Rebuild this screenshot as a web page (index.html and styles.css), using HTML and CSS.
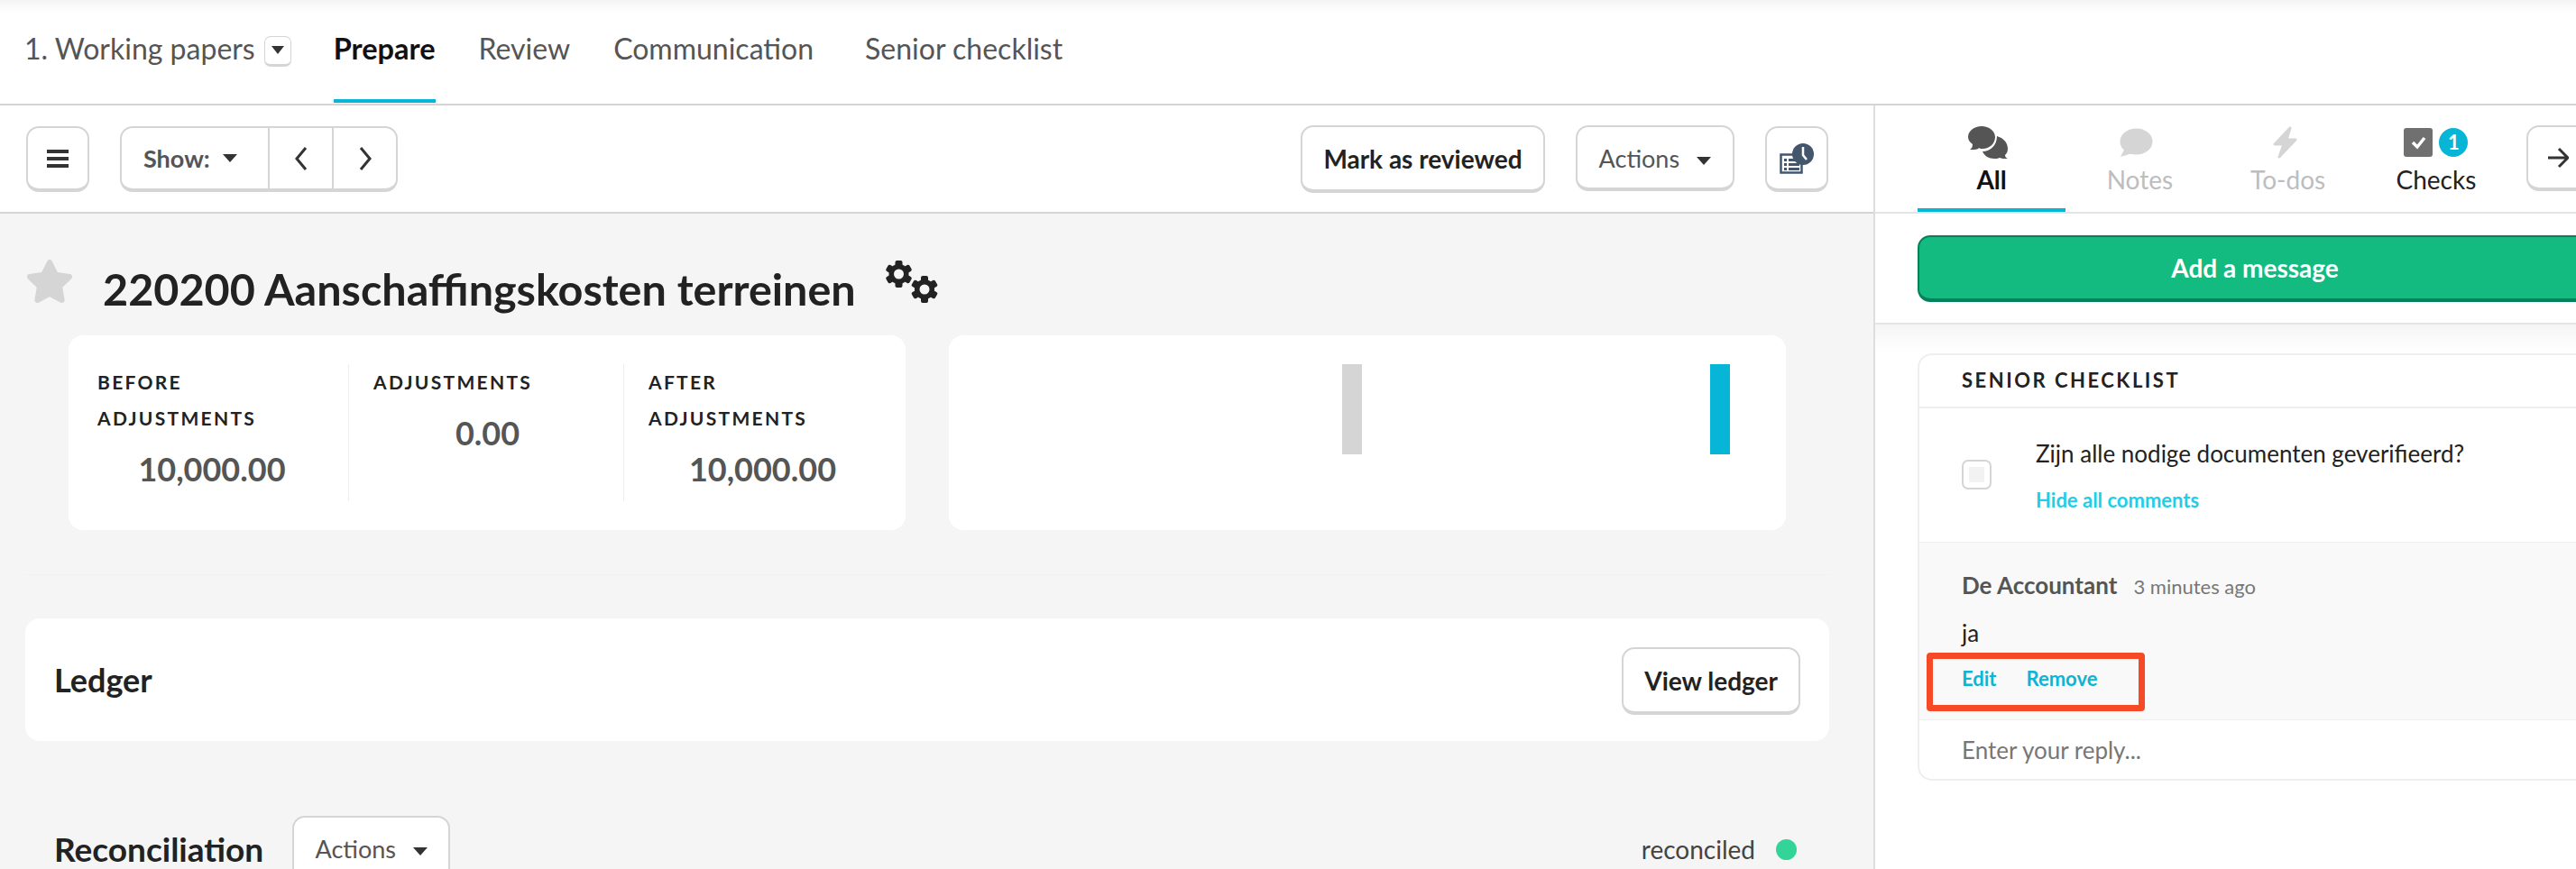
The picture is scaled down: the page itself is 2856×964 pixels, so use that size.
FILE: index.html
```html
<!DOCTYPE html>
<html lang="en">
<head>
    <meta charset="UTF-8">
    <title>Working papers</title>
    <link rel="stylesheet" href="styles.css">
</head>
<body>
    <nav class="topnav">
        <span class="crumb">1. Working papers</span>
        <button class="btn mini"><span class="caret small"></span></button>
        <a class="tab active">Prepare</a>
        <a class="tab">Review</a>
        <a class="tab">Communication</a>
        <a class="tab last">Senior checklist</a>
    </nav>

    <div class="main">
        <div class="left">
            <div class="toolbar">
                <button class="btn icon-btn">
                    <svg class="burger" viewBox="0 0 24 22"><path d="M0 1h24v4H0zM0 9h24v4H0zM0 17h24v4H0z"/></svg>
                </button>
                <div class="btn-group">
                    <div class="group-cell show">Show: <span class="caret"></span></div>
                    <div class="group-cell nav-cell">
                        <svg class="chev" viewBox="0 0 16 28"><path d="M13 2L3 14l10 12"/></svg>
                    </div>
                    <div class="group-cell nav-cell">
                        <svg class="chev" viewBox="0 0 16 28"><path d="M3 2l10 12L3 26"/></svg>
                    </div>
                </div>
                <div class="spacer"></div>
                <button class="btn strong">Mark as reviewed</button>
                <button class="btn plain">Actions <span class="caret"></span></button>
                <button class="btn icon-btn">
                    <svg class="history" viewBox="0 0 38 34">
                        <path d="M1.5 12.5h23v20h-23z" fill="#fff" stroke="#44566c" stroke-width="2.5"/>
                        <path d="M5 17h3v3H5zM10 17h12v3H10zM5 22h3v3H5zM10 22h12v3H10zM5 27h3v3H5zM10 27h12v3H10z" fill="#44566c"/>
                        <circle cx="26" cy="12" r="12" fill="#44566c"/>
                        <path d="M26 4v9l4 5" fill="none" stroke="#fff" stroke-width="2.5"/>
                    </svg>
                </button>
            </div>

            <div class="content">
                <div class="title-row">
                    <svg class="star" viewBox="0 0 576 512"><path d="M259.3 17.8L194 150.2 47.9 171.5c-26.2 3.8-36.7 36.1-17.7 54.6l105.7 103-25 145.5c-4.5 26.3 23.2 46 46.4 33.7L288 439.6l130.7 68.7c23.2 12.2 50.9-7.4 46.4-33.7l-25-145.5 105.7-103c19-18.5 8.5-50.8-17.7-54.6L382 150.2 316.7 17.8c-11.7-23.6-45.6-23.9-57.4 0z"/></svg>
                    <h1>220200 Aanschaffingskosten terreinen</h1>
                    <svg class="gears" viewBox="0 0 60 48">
                        <g transform="translate(15.5 16)">
                            <rect x="-4" y="-15" width="8" height="30" rx="2"/>
                            <rect x="-4" y="-15" width="8" height="30" rx="2" transform="rotate(60)"/>
                            <rect x="-4" y="-15" width="8" height="30" rx="2" transform="rotate(120)"/>
                            <circle r="11"/>
                            <circle r="5.5" fill="#f5f5f5"/>
                        </g>
                        <g transform="translate(44 33)">
                            <rect x="-4" y="-15" width="8" height="30" rx="2"/>
                            <rect x="-4" y="-15" width="8" height="30" rx="2" transform="rotate(60)"/>
                            <rect x="-4" y="-15" width="8" height="30" rx="2" transform="rotate(120)"/>
                            <circle r="11"/>
                            <circle r="5.5" fill="#f5f5f5"/>
                        </g>
                    </svg>
                </div>

                <div class="cards">
                    <div class="card stats">
                        <div class="stat">
                            <div class="stat-label">BEFORE<br>ADJUSTMENTS</div>
                            <div class="stat-value">10,000.00</div>
                        </div>
                        <div class="stat">
                            <div class="stat-label">ADJUSTMENTS</div>
                            <div class="stat-value">0.00</div>
                        </div>
                        <div class="stat">
                            <div class="stat-label">AFTER<br>ADJUSTMENTS</div>
                            <div class="stat-value">10,000.00</div>
                        </div>
                    </div>
                    <div class="card chart">
                        <div class="bar grey"></div>
                        <div class="bar cyan"></div>
                    </div>
                </div>

                <div class="sep"></div>

                <div class="card ledger">
                    <h2>Ledger</h2>
                    <button class="btn strong">View ledger</button>
                </div>

                <div class="recon">
                    <h2>Reconciliation</h2>
                    <button class="btn plain">Actions <span class="caret"></span></button>
                    <div class="spacer"></div>
                    <span class="recon-status">reconciled</span>
                    <span class="dot"></span>
                </div>
            </div>
        </div>

        <aside class="side">
            <div class="side-tabs">
                <div class="side-tab current">
                    <svg class="tab-icon" viewBox="3 0 46 36">
                        <path d="M16 25c-1 0-3 0-4-1-1 2-5 2-10 2 2-1 3-3 3-6-3-2-5-5-5-8C0 5 7 0 15 0s15 5 15 12-6 13-14 13z" fill="#555"/>
                        <path d="M32 11c7 2 12 7 12 14 0 3-1 5-3 7 0 2 1 3 3 4-4 0-7 0-9-1-2 1-4 1-6 1-6 0-11-3-13-8 9 0 16-7 16-17z" fill="#555"/>
                    </svg>
                    <span>All</span>
                </div>
                <div class="side-tab muted">
                    <svg class="tab-icon" viewBox="0 0 46 36">
                        <ellipse cx="19.5" cy="17" rx="18" ry="14.5" fill="#d5d5d5"/>
                        <path d="M7 24L2 34l13-4z" fill="#d5d5d5"/>
                    </svg>
                    <span>Notes</span>
                </div>
                <div class="side-tab muted">
                    <svg class="tab-icon" viewBox="0 0 46 36">
                        <path d="M25 2L8 20h10l-5 14 18-19H21z" fill="#d5d5d5" stroke="#d5d5d5" stroke-width="3" stroke-linejoin="round"/>
                    </svg>
                    <span>To-dos</span>
                </div>
                <div class="side-tab">
                    <div class="check-icons">
                        <svg class="check-box" viewBox="0 0 32 32">
                            <rect width="32" height="32" rx="3" fill="#707070"/>
                            <path d="M10 16l5 5 8-10" fill="none" stroke="#fff" stroke-width="3.5"/>
                        </svg>
                        <span class="badge">1</span>
                    </div>
                    <span>Checks</span>
                </div>
                <button class="btn arrow-btn">
                    <svg class="arrow" viewBox="0 0 24 24"><path d="M1 12h21M13 2l10 10-10 10"/></svg>
                </button>
            </div>

            <div class="add-row">
                <button class="add-btn">Add a message</button>
            </div>

            <div class="side-body">
                <div class="check-card">
                    <div class="check-head">SENIOR CHECKLIST</div>
                    <div class="check-item">
                        <div class="checkbox"><span></span></div>
                        <div>
                            <div class="question">Zijn alle nodige documenten geverifieerd?</div>
                            <a class="hide-link">Hide all comments</a>
                        </div>
                    </div>
                    <div class="comment">
                        <div class="comment-meta">
                            <strong>De Accountant</strong>
                            <span>3 minutes ago</span>
                        </div>
                        <div class="comment-text">ja</div>
                        <div class="comment-actions">
                            <a>Edit</a>
                            <a>Remove</a>
                            <div class="annotation"></div>
                        </div>
                    </div>
                    <div class="reply">Enter your reply...</div>
                </div>
            </div>
        </aside>
    </div>
</body>
</html>
```

FILE: styles.css
```css
html, body {
    margin: 0;
    height: 964px;
    overflow: hidden;
}
body {
    font-family: 'Lato', 'Liberation Sans', sans-serif;
    color: #222;
    background-color: #fff;
    width: 2856px;
}
h1, h2 {
    margin: 0;
}
.spacer {
    flex: 1;
}

/* buttons */
.btn {
    font-family: inherit;
    background-color: #fff;
    border: 2px solid #d5d5d5;
    border-bottom-width: 4px;
    border-radius: 14px;
    box-sizing: border-box;
    color: #222;
    white-space: nowrap;
}
.caret {
    display: inline-block;
    width: 0;
    height: 0;
    border-left: 8px solid transparent;
    border-right: 8px solid transparent;
    border-top: 9px solid #333;
    vertical-align: 3px;
    margin-left: 12px;
}
.caret.small {
    margin: 0;
    border-left-width: 7px;
    border-right-width: 7px;
    vertical-align: 1px;
}
.strong {
    height: 75px;
    padding: 0 23px;
    font-size: 28px;
    font-weight: 700;
}
.plain {
    height: 73px;
    padding: 2px 24px 0;
    font-size: 27px;
    color: #555;
}

/* top navigation */
.topnav {
    height: 115px;
    display: flex;
    align-items: flex-start;
    padding-left: 27px;
    border-bottom: 2px solid #d5d5d5;
    background: linear-gradient(#f4f4f4, #fff 14px);
    font-size: 32px;
}
.crumb {
    margin-top: 35px;
    line-height: 38px;
    color: #555;
}
.btn.mini {
    width: 30px;
    height: 34px;
    margin: 40px 47px 0 10px;
    padding: 0;
    border-radius: 7px;
    border-width: 1px 1px 3px;
}
.tab {
    height: 75px;
    margin-top: 35px;
    margin-right: 48px;
    line-height: 38px;
    color: #555;
    border-bottom: 4px solid transparent;
}
.tab.active {
    color: #111;
    font-size: 32.5px;
    font-weight: 700;
    border-bottom-color: #07b6d6;
}
.tab.last {
    margin-left: 9px;
}

/* toolbar */
.main {
    display: flex;
    height: 847px;
}
.left {
    width: 2077px;
    flex: none;
    border-right: 2px solid #dedede;
    background-color: #f5f5f5;
}
.toolbar {
    height: 120px;
    box-sizing: border-box;
    padding: 22px 50px 0 29px;
    display: flex;
    align-items: flex-start;
    gap: 34px;
    background-color: #fff;
    border-bottom: 2px solid #d5d5d5;
}
.icon-btn {
    width: 70px;
    height: 73px;
    margin-top: 1px;
    padding: 0;
    flex: none;
}
.burger {
    width: 24px;
    height: 22px;
    display: block;
    margin: auto;
    fill: #333;
}
.btn-group {
    display: flex;
    height: 73px;
    margin-top: 1px;
    box-sizing: border-box;
    background-color: #fff;
    border: 2px solid #d5d5d5;
    border-bottom-width: 4px;
    border-radius: 14px;
}
.group-cell {
    display: flex;
    align-items: center;
    justify-content: center;
    font-size: 27px;
    font-weight: 700;
    color: #555;
}
.show {
    width: 162px;
    box-sizing: border-box;
    padding-left: 24px;
    justify-content: flex-start;
    flex: none;
}
.show .caret {
    margin-left: 14px;
    vertical-align: 0;
}
.nav-cell {
    width: 69px;
    border-left: 2px solid #d5d5d5;
}
.chev {
    width: 16px;
    height: 28px;
    fill: none;
    stroke: #333;
    stroke-width: 3;
}
.history {
    width: 38px;
    height: 34px;
    display: block;
    margin: auto;
}

/* content */
.content {
    padding: 0 49px 0 28px;
}
.title-row {
    height: 135px;
    display: flex;
    align-items: flex-start;
}
.star {
    width: 54px;
    height: 48px;
    margin-top: 51px;
    fill: #d5d5d5;
}
h1 {
    margin: 51px 0 0 32px;
    font-size: 48.5px;
    line-height: 64px;
    color: #222;
}
.gears {
    width: 60px;
    height: 48px;
    margin: 51px 0 0 32px;
    fill: #222;
}
.cards {
    display: flex;
    gap: 48px;
    margin-left: 48px;
}
.card {
    background-color: #fff;
    border-radius: 16px;
}
.stats {
    width: 928px;
    height: 216px;
    box-sizing: border-box;
    padding: 32px 8px 32px 5px;
    display: flex;
}
.stat {
    width: 305px;
    box-sizing: border-box;
    padding: 0 24px 0 27px;
    border-left: 1px solid #eee;
}
.stat:first-child {
    border-left: none;
}
.stat-label {
    font-size: 21px;
    font-weight: 700;
    line-height: 40px;
    letter-spacing: 2.3px;
    color: #222;
}
.stat-value {
    font-size: 36px;
    font-weight: 700;
    line-height: 44px;
    margin-top: 14px;
    text-align: center;
    color: #555;
}
.chart {
    width: 928px;
    height: 216px;
    position: relative;
}
.bar {
    position: absolute;
    top: 32px;
    width: 22px;
    height: 100px;
}
.bar.grey {
    left: 436px;
    background-color: #d5d5d5;
}
.bar.cyan {
    left: 844px;
    background-color: #07b6d6;
}
.sep {
    height: 1px;
    margin-top: 49px;
    background-color: #f1f1f1;
}
.ledger {
    height: 136px;
    margin-top: 48px;
    box-sizing: border-box;
    padding: 32px 32px 0;
    display: flex;
    align-items: flex-start;
    justify-content: space-between;
}
.ledger h2 {
    font-size: 36px;
    line-height: 72px;
    color: #222;
}
.recon {
    display: flex;
    align-items: flex-start;
    padding: 83px 36px 0 32px;
}
.recon h2 {
    font-size: 37px;
    line-height: 74px;
    color: #222;
}
.recon .btn {
    width: 175px;
    margin-left: 32px;
    padding: 2px 0 0;
}
.recon-status {
    font-size: 28px;
    line-height: 74px;
    color: #444;
}
.dot {
    width: 23px;
    height: 23px;
    margin: 26px 0 0 23px;
    border-radius: 50%;
    background-color: #33d497;
}

/* right panel */
.side {
    width: 842px;
    flex: none;
    position: relative;
}
.side-tabs {
    height: 120px;
    box-sizing: border-box;
    padding-left: 47px;
    display: flex;
    border-bottom: 2px solid #e5e5e5;
}
.side-tab {
    width: 165px;
    height: 118px;
    box-sizing: border-box;
    border-bottom: 4px solid transparent;
    display: flex;
    flex-direction: column;
    align-items: center;
    padding-top: 23px;
    font-size: 28px;
    line-height: 32px;
    color: #222;
}
.side-tab.current {
    color: #111;
    font-weight: 700;
    border-bottom-color: #07b6d6;
}
.side-tab.muted {
    color: #bdbdbd;
}
.tab-icon {
    width: 46px;
    height: 36px;
    margin-bottom: 7px;
    overflow: visible;
}
.check-icons {
    display: flex;
    align-items: center;
    gap: 7px;
    height: 36px;
    margin-bottom: 7px;
}
.check-box {
    width: 32px;
    height: 32px;
}
.badge {
    width: 32px;
    height: 32px;
    border-radius: 50%;
    background-color: #07b6d6;
    color: #fff;
    font-size: 22px;
    font-weight: 700;
    line-height: 32px;
    text-align: center;
}
.arrow-btn {
    width: 120px;
    height: 73px;
    margin: 22px 0 0 18px;
    padding: 0 0 0 21px;
    text-align: left;
    flex: none;
}
.arrow {
    width: 24px;
    height: 24px;
    display: block;
    fill: none;
    stroke: #333;
    stroke-width: 3;
}
.add-row {
    height: 123px;
    box-sizing: border-box;
    padding: 24px 47px 0;
    border-bottom: 2px solid #e5e5e5;
}
.add-btn {
    width: 100%;
    height: 74px;
    font-family: inherit;
    font-size: 28px;
    font-weight: 700;
    color: #fff;
    background-color: #14bb80;
    border: 2px solid #067f5b;
    border-bottom-width: 4px;
    border-radius: 14px;
}
.side-body {
    padding: 32px 47px 0;
    background: linear-gradient(#f5f5f5, #fff 30px);
}
.check-card {
    border: 2px solid #eee;
    border-radius: 16px;
    background-color: #fff;
    height: 474px;
    box-sizing: border-box;
}
.check-head {
    height: 59px;
    box-sizing: border-box;
    padding: 0 0 0 47px;
    line-height: 56px;
    font-size: 22px;
    font-weight: 700;
    letter-spacing: 2.5px;
    color: #222;
    border-bottom: 2px solid #eee;
}
.check-item {
    height: 148px;
    box-sizing: border-box;
    padding: 32px 0 0 47px;
    display: flex;
    align-items: flex-start;
    gap: 49px;
}
.checkbox {
    width: 33px;
    height: 33px;
    margin-top: 25px;
    box-sizing: border-box;
    border: 2px solid #d5d5d5;
    border-radius: 7px;
    padding: 6px;
    flex: none;
}
.checkbox span {
    display: block;
    height: 100%;
    background-color: #f2f2f2;
}
.question {
    font-size: 26px;
    line-height: 36px;
    color: #222;
}
.hide-link {
    display: block;
    margin-top: 20px;
    font-size: 22px;
    font-weight: 700;
    line-height: 28px;
    color: #22cde8;
}
.comment {
    height: 198px;
    box-sizing: border-box;
    padding: 29px 47px 0;
    background-color: #f9f9f9;
    border-top: 1px solid #eee;
    border-bottom: 1px solid #eee;
}
.comment-meta {
    line-height: 36px;
}
.comment-meta strong {
    font-size: 26px;
    color: #555;
}
.comment-meta span {
    margin-left: 14px;
    font-size: 22px;
    color: #777;
}
.comment-text {
    margin-top: 13px;
    font-size: 26px;
    line-height: 36px;
    color: #222;
}
.comment-actions {
    position: relative;
    margin-top: 17px;
    font-size: 22px;
    font-weight: 700;
    line-height: 32px;
    color: #0bb5d6;
    display: flex;
    gap: 33px;
}
.annotation {
    position: absolute;
    left: -39px;
    top: -13px;
    width: 242px;
    height: 65px;
    box-sizing: border-box;
    border: 7px solid #f64a26;
    border-radius: 4px;
}
.reply {
    padding: 15px 0 0 47px;
    font-size: 26px;
    line-height: 36px;
    color: #777;
}
```
